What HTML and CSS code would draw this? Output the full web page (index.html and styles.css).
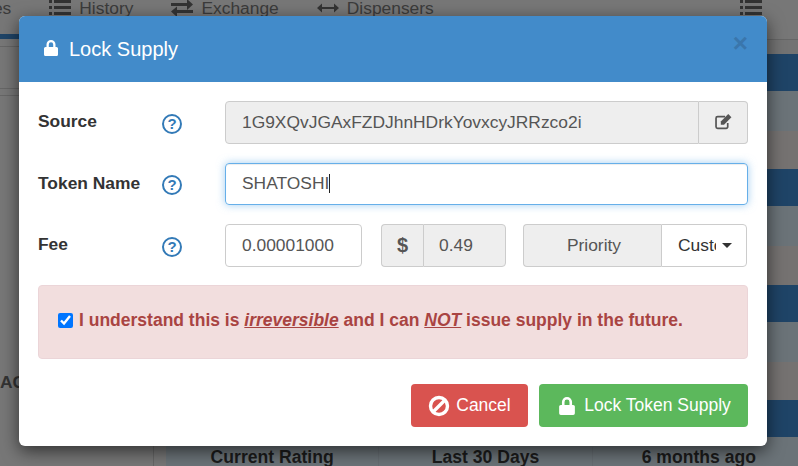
FILE: index.html
```html
<!DOCTYPE html>
<html lang="en">
<head>
    <meta charset="UTF-8">
    <title>Lock Supply</title>
    <link rel="stylesheet" href="styles.css">
</head>
<body>
    <div class="page">
        <div class="nav">
            <span class="nav-item nav-first">Pages</span>
            <span class="nav-item">
                <svg class="nav-icon" viewBox="0 0 22 18"><path d="M0 1h3v3H0zM5 1h17v3H5zM0 7h3v3H0zM5 7h17v3H5zM0 13h3v3H0zM5 13h17v3H5z"/></svg>History
            </span>
            <span class="nav-item">
                <svg class="nav-icon" viewBox="0 0 22 18"><path d="M0 4h16V0l6 5.500-6 5.500V7H0zM22 11H6V7.500L0 12.500 6 18v-4h16z"/></svg>Exchange
            </span>
            <span class="nav-item">
                <svg class="nav-icon" viewBox="0 0 22 18"><path d="M0 9l5-4.500V8h12V4.500L22 9l-5 4.500V10H5v3.500z"/></svg>Dispensers
            </span>
            <svg class="nav-icon nav-menu" viewBox="0 0 22 18"><path d="M0 1h3v3H0zM5 1h17v3H5zM0 7h3v3H0zM5 7h17v3H5zM0 13h3v3H0zM5 13h17v3H5z"/></svg>
        </div>
        <div class="nav-tab"></div>
        <div class="content">
            <div class="side">
                <div class="side-rule"></div>
                <div class="side-label">AC</div>
            </div>
            <div class="table">
                <div class="row row-dark"></div>
                <div class="row row-grey"></div>
                <div class="row row-brown"></div>
                <div class="row row-dark"></div>
                <div class="row row-grey"></div>
                <div class="row row-brown"></div>
                <div class="row row-dark"></div>
                <div class="row row-grey"></div>
                <div class="row row-brown"></div>
                <div class="row row-dark"></div>
                <div class="row row-grey row-cells">
                    <div class="cell">Current Rating</div>
                    <div class="cell">Last 30 Days</div>
                    <div class="cell">6 months ago</div>
                </div>
            </div>
        </div>
    </div>

    <div class="modal">
        <div class="modal-header">
            <svg class="lock-icon" viewBox="0 0 14 16"><path d="M2.500 7V4.500a4.500 4.500 0 0 1 9 0V7h1a1.500 1.500 0 0 1 1.500 1.500v6a1.500 1.500 0 0 1-1.500 1.500h-11A1.500 1.500 0 0 1 0 14.500v-6A1.500 1.500 0 0 1 1.500 7zm2.300 0h4.400V4.500a2.200 2.200 0 0 0-4.400 0z"/></svg>
            <h4 class="modal-title">Lock Supply</h4>
            <span class="close">&times;</span>
        </div>
        <div class="modal-body">
            <div class="form-row">
                <label class="form-label">Source</label>
                <span class="help">?</span>
                <div class="input-group grow">
                    <input class="form-control grow joined-right" type="text" value="1G9XQvJGAxFZDJhnHDrkYovxcyJRRzco2i" disabled>
                    <span class="addon addon-edit">
                        <svg class="edit-icon" viewBox="0 0 18 16"><path d="M12.500 9.500V13a1.500 1.500 0 0 1-1.500 1.500H3A1.500 1.500 0 0 1 1.500 13V5A1.500 1.500 0 0 1 3 3.500h7" fill="none" stroke="#555" stroke-width="1.600"/><path d="M6 8l7-7 3 3-7 7H6z" fill="#555"/></svg>
                    </span>
                </div>
            </div>
            <div class="form-row">
                <label class="form-label">Token Name</label>
                <span class="help">?</span>
                <div class="token-input grow">SHATOSHI<span class="caret-bar"></span></div>
            </div>
            <div class="form-row">
                <label class="form-label">Fee</label>
                <span class="help">?</span>
                <input class="form-control fee-input" type="text" value="0.00001000">
                <div class="input-group usd-group">
                    <span class="addon addon-usd">$</span>
                    <input class="form-control grow joined-left" type="text" value="0.49" disabled>
                </div>
                <div class="input-group priority-group">
                    <span class="addon addon-priority">Priority</span>
                    <span class="custom-btn"><span class="custom-text">Custom</span><span class="caret"></span></span>
                </div>
            </div>
            <div class="alert">
                <input class="alert-check" type="checkbox" checked>
                <span>I understand this is <em>irreversible</em> and I can <em>NOT</em> issue supply in the future.</span>
            </div>
            <div class="modal-footer">
                <button class="btn btn-cancel">
                    <svg class="btn-icon" viewBox="0 0 22 22"><circle cx="11" cy="11" r="8.500" fill="none" stroke="#fff" stroke-width="3.400"/><path d="M5 17L17 5" stroke="#fff" stroke-width="3.400"/></svg>
                    Cancel
                </button>
                <button class="btn btn-lock">
                    <svg class="btn-lock-icon" viewBox="0 0 14 16"><path fill="#fff" d="M2.500 7V4.500a4.500 4.500 0 0 1 9 0V7h1a1.500 1.500 0 0 1 1.500 1.500v6a1.500 1.500 0 0 1-1.500 1.500h-11A1.500 1.500 0 0 1 0 14.500v-6A1.500 1.500 0 0 1 1.500 7zm2.300 0h4.400V4.500a2.200 2.200 0 0 0-4.400 0z"/></svg>
                    Lock Token Supply
                </button>
            </div>
        </div>
    </div>
</body>
</html>
```

FILE: styles.css
```css
* {
    box-sizing: border-box;
}
body {
    margin: 0;
    height: 466px;
    overflow: hidden;
    font-family: "Liberation Sans", Arial, sans-serif;
    font-size: 17.400px;
    color: #333;
}
.page {
    height: 466px;
    overflow: hidden;
    background-color: #777;
}
.nav {
    display: flex;
    align-items: center;
    gap: 38px;
    height: 20px;
    margin-top: -2px;
    margin-left: -38px;
    font-size: 17.400px;
    color: #3b3b3b;
}
.nav-item {
    display: flex;
    align-items: center;
    gap: 8px;
}
.nav-icon {
    width: 22px;
    height: 18px;
    fill: #333;
}
.nav-menu {
    margin-left: auto;
    margin-right: 36px;
}
.nav-tab {
    width: 20px;
    height: 5px;
    margin-top: 16px;
    background-color: #1f4467;
}
.content {
    display: flex;
    height: 425px;
    margin-top: 7px;
    border-top: 1px solid #666;
}
.side {
    width: 154px;
    flex-shrink: 0;
    margin-right: 12px;
    border-right: 1px solid #666;
}
.side-rule {
    height: 8px;
    margin-top: 41px;
    margin-bottom: 276px;
    border-top: 1px solid #666;
    border-bottom: 1px solid #666;
}
.side-label {
    font-size: 17.400px;
    font-weight: bold;
    color: #333;
}
.table {
    width: 640px;
    height: 426px;
    flex-shrink: 0;
    margin-top: -8px;
    padding-top: 14px;
    border-top: 1px solid #666;
    background-color: #737373;
}
.row {
    height: 38.400px;
}
.row-dark {
    height: 37px;
    background-color: #1f4467;
}
.row-grey {
    height: 40px;
    background-color: #6b7378;
}
.row-brown {
    background-color: #757271;
}
.row-cells {
    display: flex;
    padding-top: 10px;
}
.cell {
    flex: 1;
    text-align: center;
    font-size: 17.600px;
    font-weight: bold;
    color: #1b1b1b;
    border-right: 1px solid #666d72;
}
.modal {
    position: absolute;
    left: 19px;
    top: 16px;
    width: 748px;
    height: 430px;
    overflow: hidden;
    background-color: #fff;
    border-radius: 6px;
    box-shadow: 0 5px 17px rgba(0,0,0,0.6);
}
.modal-header {
    display: flex;
    align-items: center;
    height: 66px;
    padding: 0 19px 0 25px;
    background-color: #428bca;
    color: #fff;
}
.lock-icon {
    width: 14px;
    height: 16px;
    margin-top: -3px;
    fill: #fff;
}
.modal-title {
    flex: 1;
    margin: 0 0 0 11px;
    font-size: 20px;
    font-weight: normal;
}
.close {
    margin-top: -12px;
    margin-right: 0;
    font-size: 26px;
    font-weight: bold;
    color: #3a76ac;
}
.modal-body {
    padding: 19px;
}
.form-row {
    display: flex;
    align-items: center;
    height: 42.500px;
    margin-bottom: 19px;
}
.form-label {
    width: 124px;
    flex-shrink: 0;
    margin-top: -1px;
    font-weight: bold;
    color: #333;
}
.help {
    width: 20px;
    height: 20px;
    flex-shrink: 0;
    margin-top: 3px;
    margin-right: 43px;
    border: 2px solid #337ab7;
    border-radius: 50%;
    color: #337ab7;
    font-size: 15px;
    font-weight: bold;
    line-height: 16px;
    text-align: center;
}
.grow {
    flex: 1;
    min-width: 0;
}
.input-group {
    display: flex;
    height: 42.500px;
}
.form-control {
    height: 42.500px;
    padding: 0 16px;
    border: 1px solid #ccc;
    border-radius: 4px;
    font-family: inherit;
    font-size: 17.400px;
    color: #555;
    background-color: #fff;
}
.form-control:disabled {
    background-color: #eee;
    opacity: 1;
}
.joined-right {
    border-radius: 4px 0 0 4px;
}
.joined-left {
    width: 83px;
    padding-left: 15px;
    border-left: 1px solid #ccc;
    border-radius: 0 4px 4px 0;
}
.addon {
    display: flex;
    align-items: center;
    justify-content: center;
    border: 1px solid #ccc;
    background-color: #eee;
    color: #555;
}
.addon-edit {
    width: 49px;
    border-left: 0;
    border-radius: 0 4px 4px 0;
}
.edit-icon {
    width: 20px;
    height: 17px;
    margin-top: -2px;
    margin-left: 1px;
}
.token-input {
    display: flex;
    align-items: center;
    height: 42px;
    padding: 0 16px;
    border: 1px solid #66afe9;
    border-radius: 4px;
    color: #555;
    box-shadow: inset 0 1px 1px rgba(0,0,0,0.075), 0 0 8px rgba(102,175,233,0.6);
}
.caret-bar {
    width: 1px;
    height: 19px;
    background-color: #222;
}
.fee-input {
    width: 137px;
}
.usd-group {
    width: 125px;
    margin-left: 19px;
}
.addon-usd {
    width: 42px;
    border-right: 0;
    border-radius: 4px 0 0 4px;
    font-size: 20px;
    font-weight: bold;
}
.priority-group {
    width: 224px;
    margin-left: 17px;
}
.addon-priority {
    width: 138px;
    padding-left: 3px;
    border-right: 0;
    border-radius: 4px 0 0 4px;
}
.custom-btn {
    display: flex;
    align-items: center;
    flex: 1;
    padding-left: 16px;
    border: 1px solid #ccc;
    border-radius: 0 4px 4px 0;
    color: #333;
}
.custom-text {
    width: 38px;
    overflow: hidden;
}
.caret {
    width: 0;
    height: 0;
    margin-left: 6px;
    border-top: 5px solid #333;
    border-left: 5px solid transparent;
    border-right: 5px solid transparent;
}
.alert {
    display: flex;
    align-items: center;
    height: 74px;
    margin-top: -0.500px;
    padding: 0 19px 4px 19px;
    border: 1px solid #ebd5d8;
    border-radius: 4px;
    background-color: #f2dede;
    color: #a94442;
    font-size: 17.500px;
    font-weight: bold;
}
.alert em {
    text-decoration: underline;
}
.alert-check {
    width: 15px;
    height: 15px;
    margin: 0 6px 0 0;
}
.modal-footer {
    display: flex;
    justify-content: flex-end;
    gap: 11px;
    margin-top: 25px;
}
.btn {
    display: flex;
    align-items: center;
    justify-content: center;
    height: 43px;
    border: 0;
    border-radius: 4px;
    color: #fff;
    font-family: inherit;
    font-size: 17.500px;
}
.btn-cancel {
    width: 117px;
    gap: 6px;
    background-color: #d9534f;
}
.btn-lock {
    width: 209px;
    gap: 9px;
    padding-left: 9px;
    background-color: #5cb85c;
}
.btn-icon {
    width: 22px;
    height: 22px;
}
.btn-lock-icon {
    width: 16px;
    height: 18px;
}
```
